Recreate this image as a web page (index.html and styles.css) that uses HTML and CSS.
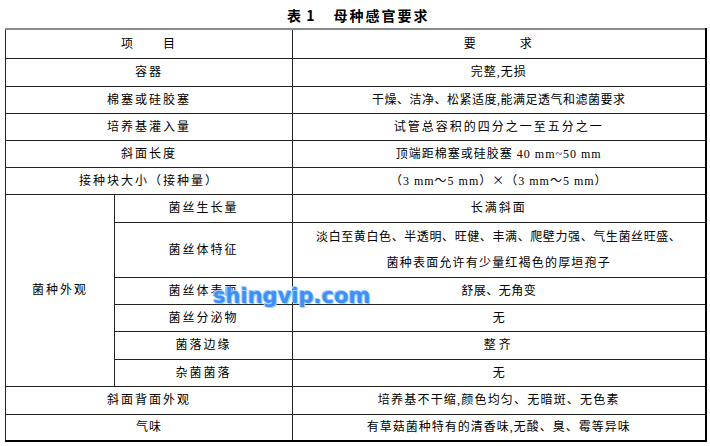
FILE: index.html
```html
<!DOCTYPE html>
<html lang="zh-CN">
<head>
<meta charset="utf-8">
<title>表1 母种感官要求</title>
<link rel="stylesheet" href="styles.css">
</head>
<body>
<div class="page">
  <div class="title"><span class="t-num">表 1</span><span class="t-name">母种感官要求</span></div>
  <table class="spec">
    <colgroup><col class="c1"><col class="c2"><col class="c3"></colgroup>
    <tr class="r29"><td colspan="2" class="ls2">项&emsp;&emsp;目</td><td class="ls2">要&emsp;&emsp;&emsp;求</td></tr>
    <tr class="r28"><td colspan="2" class="ls2">容器</td><td class="ls1">完整,无损</td></tr>
    <tr class="r27"><td colspan="2" class="ls2">棉塞或硅胶塞</td><td class="ls05">干燥、洁净、松紧适度,能满足透气和滤菌要求</td></tr>
    <tr class="r27"><td colspan="2" class="ls2">培养基灌入量</td><td class="ls2">试管总容积的四分之一至五分之一</td></tr>
    <tr class="r27"><td colspan="2" class="ls2">斜面长度</td><td class="ls1">顶端距棉塞或硅胶塞 40 mm~50 mm</td></tr>
    <tr class="r27"><td colspan="2" class="ls2">接种块大小（接种量）</td><td class="ls1">（3 mm～5 mm）<span class="cjk">×</span>（3 mm～5 mm）</td></tr>
    <tr class="r28"><td rowspan="6" class="ls2">菌种外观</td><td class="ls2">菌丝生长量</td><td class="ls2">长满斜面</td></tr>
    <tr class="r55"><td class="ls2">菌丝体特征</td><td class="ls07 two">淡白至黄白色、半透明、旺健、丰满、爬壁力强、气生菌丝旺盛、<br><span class="wide">菌种表面允许有少量红褐色的厚垣孢子</span></td></tr>
    <tr class="r27"><td class="ls2">菌丝体表面</td><td class="ls05">舒展、无角变</td></tr>
    <tr class="r27"><td class="ls2">菌丝分泌物</td><td>无</td></tr>
    <tr class="r28"><td class="ls2">菌落边缘</td><td class="ls3">整齐</td></tr>
    <tr class="r27"><td class="ls2">杂菌菌落</td><td>无</td></tr>
    <tr class="r28"><td colspan="2" class="ls2">斜面背面外观</td><td class="ls12">培养基不干缩,颜色均匀、无暗斑、无色素</td></tr>
    <tr class="r27"><td colspan="2" class="ls1">气味</td><td class="ls1">有草菇菌种特有的清香味,无酸、臭、霉等异味</td></tr>
  </table>
  <div class="watermark">shingvip.com</div>
</div>
</body>
</html>
```
FILE: styles.css
```css
html, body {
  margin: 0;
  padding: 0;
  background: #ffffff;
}
.page {
  position: relative;
  width: 710px;
  height: 446px;
  overflow: hidden;
  font-family: "Liberation Serif", "Noto Sans CJK SC", serif;
  color: #000;
}
.title {
  height: 28px;
  box-sizing: border-box;
  padding: 7px 0 0 287px;
  font-family: "Noto Sans CJK SC", sans-serif;
  font-weight: bold;
  font-size: 14px;
  line-height: 16px;
}
.t-num { margin-right: 18px; letter-spacing: 1px; }
.t-name { letter-spacing: 2px; }
.spec {
  margin-left: 5px;
  width: 700px;
  border-collapse: collapse;
  table-layout: fixed;
  border-top: 2px solid #8a8a8a;
  border-left: 1px solid #444;
  border-right: 2px solid #000;
  border-bottom: 2px solid #000;
}
.c1 { width: 109px; }
.c2 { width: 178px; }
.c3 { width: 413px; }
.spec td {
  border: 1.5px solid #222;
  padding: 0;
  text-align: center;
  vertical-align: middle;
  font-size: 12px;
  line-height: 16px;
}
.cjk { font-family: "Noto Sans CJK SC", sans-serif; }
.wide { letter-spacing: 1.2px; }
.r29 { height: 29px; }
.r28 { height: 28px; }
.r27 { height: 27px; }
.r55 { height: 55px; }
.spec td.two { line-height: 26px; }
.ls05 { letter-spacing: 0.5px; }
.ls07 { letter-spacing: 0.6px; }
.ls1 { letter-spacing: 1px; }
.ls12 { letter-spacing: 1.2px; }
.ls2 { letter-spacing: 2px; }
.ls3 { letter-spacing: 3px; }
.watermark {
  position: absolute;
  left: 213px;
  top: 283px;
  font-family: "DejaVu Sans", sans-serif;
  font-weight: bold;
  font-size: 21px;
  line-height: 26px;
  letter-spacing: 0px;
  color: #3d8ff2;
  text-shadow: 0 0 1px #a8d4ff, 0 0 2px #a8d4ff, 1px 1px 0 #9ccbff, -1px -1px 0 #9ccbff;
}
```
